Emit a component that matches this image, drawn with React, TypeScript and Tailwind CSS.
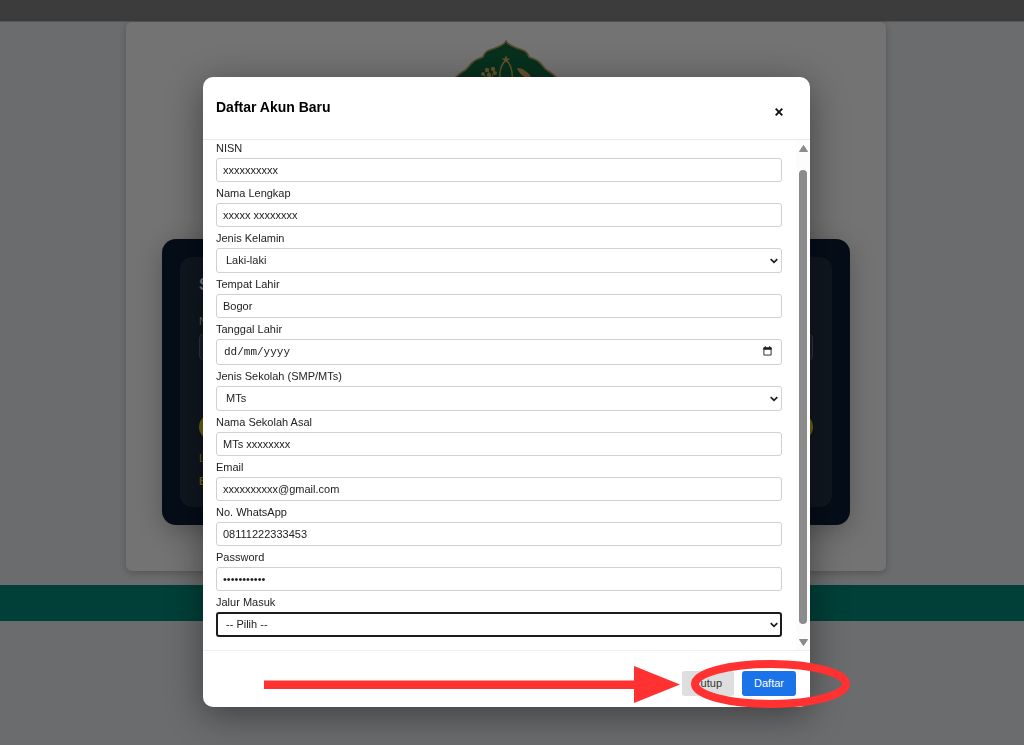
import React, { useState } from "react";

const fieldClass =
  "block w-full rounded-[3px] border border-[#d0d0d0] bg-white text-[11px] text-[#222] outline-none";

type RowProps = { id: string; label: string; children: React.ReactNode };

function Row({ id, label, children }: RowProps) {
  return (
    <div className="mb-[3px]">
      <label htmlFor={id} className="mb-[2px] block text-[11px] leading-4 text-[#222]">
        {label}
      </label>
      {children}
    </div>
  );
}

type TextRowProps = { id: string; label: string; value: string; type?: string };

function TextRow({ id, label, value, type = "text" }: TextRowProps) {
  const [text, setText] = useState(value);
  return (
    <Row id={id} label={label}>
      <input
        id={id}
        type={type}
        value={text}
        onChange={(e) => setText(e.target.value)}
        className={`${fieldClass} h-6 px-[6px]`}
      />
    </Row>
  );
}

function SelectRow({ id, label, options, active = false }: { id: string; label: string; options: string[]; active?: boolean }) {
  return (
    <Row id={id} label={label}>
      <div className="relative">
        <select
          id={id}
          className={
            active
              ? "block h-[25px] w-full appearance-none rounded-[3px] border-2 border-[#1c1c1c] bg-white px-2 text-[11px] text-[#222] outline-none"
              : `${fieldClass} h-[25px] appearance-none px-[9px]`
          }
        >
          {options.map((o) => (
            <option key={o}>{o}</option>
          ))}
        </select>
        <svg className="pointer-events-none absolute top-[9px] right-1 h-2 w-2" viewBox="0 0 8 8" fill="none" stroke="#1c1c1c" strokeWidth="1.7">
          <path d="M0.7 2.2 L4 5.3 L7.3 2.2" />
        </svg>
      </div>
    </Row>
  );
}

function Emblem() {
  return (
    <svg className="h-[110px] w-[110px]" viewBox="0 0 110 110">
      <path
        d="M55 1 C53 5 49 6 44.500 8 C39 10 34 10 32 17 C28 19 25 19 22 22 C18 25 17 29 13 31 C9 33 6 36 2 40 L3 70 L55 109 L107 70 L108 40 C104 36 101 33 97 31 C93 29 92 25 88 22 C85 19 82 19 78 17 C76 10 71 10 65.500 8 C61 6 57 5 55 1Z"
        fill="#07301d"
        stroke="#56492a"
        strokeWidth="1.6"
      />
      <path d="M55 15 L56.200 18.400 L59.400 18.400 L56.800 20.400 L57.800 23.600 L55 21.700 L52.200 23.600 L53.200 20.400 L50.600 18.400 L53.800 18.400Z" fill="#63532c" />
      <path d="M53 22 C50 26 48 31 49 40 M57 22 C60 26 62 31 61 40" fill="none" stroke="#63532c" strokeWidth="1.4" />
      <g fill="#63532c">
        <circle cx="36" cy="30" r="2.2" />
        <circle cx="42" cy="29" r="2.2" />
        <circle cx="32" cy="34" r="2" />
        <circle cx="38" cy="35" r="2.2" />
        <circle cx="44" cy="33" r="2" />
        <path d="M66 28 C72 28 78 32 81 39 C73 38 68 34 66 28Z" />
      </g>
      <path d="M32 34 L36 38 M37 30 L40 38 M43 30 L41 38" fill="none" stroke="#63532c" />
    </svg>
  );
}

function LoginPage() {
  return (
    <div className="flex min-h-screen flex-col bg-[#6b6c6e]" aria-hidden="true">
      <header className="h-[22px] border-b border-[#555] bg-[#3c3c3c]" />
      <main className="pr-3">
        <section className="mx-auto flex w-full max-w-[760px] flex-col items-center rounded-md bg-[#737373] px-9 pt-[18px] pb-[46px] shadow-[0_2px_7px_rgba(0,0,0,0.22)]">
          <Emblem />
          <div className="mt-[89px] w-full rounded-[14px] bg-[#050d18] p-[18px] shadow-[0_6px_24px_rgba(0,0,0,0.25)]">
            <div className="rounded-[12px] bg-[#10171f] px-[19px] py-[18px]">
              <h2 className="text-[16px] leading-5 font-bold text-[#777]">S</h2>
              <p className="mt-[18px] text-[11px] leading-4 text-[#666]">N</p>
              <div className="mt-[5px] h-[26px] rounded border border-[#30363c] bg-[#1a2129]" />
              <div className="mt-[54px] h-[26px] rounded-full bg-[#6d6314]" />
              <p className="mt-[10px] text-[11px] leading-4 text-[#6d6314]">L</p>
              <p className="mt-[7px] text-[11px] leading-4 font-bold text-[#6d6314]">B</p>
            </div>
          </div>
        </section>
      </main>
      <footer className="mt-[14px] h-9 bg-[#014038]" />
    </div>
  );
}

function Scrollbar() {
  return (
    <div className="flex w-[14px] shrink-0 flex-col items-center justify-between bg-[#fcfcfc] pt-[5px] pb-1">
      <svg className="h-[7px] w-[9px]" viewBox="0 0 9 7">
        <path d="M4.5 0.5 L8.5 6.5 H0.5Z" fill="#8b8b8b" stroke="#8b8b8b" strokeLinejoin="round" />
      </svg>
      <div className="mt-[18px] mb-[15px] w-2 flex-1 rounded-full bg-[#8b8b8b]" />
      <svg className="h-[7px] w-[9px]" viewBox="0 0 9 7">
        <path d="M4.5 6.5 L8.5 0.5 H0.5Z" fill="#8b8b8b" stroke="#8b8b8b" strokeLinejoin="round" />
      </svg>
    </div>
  );
}

function Annotation() {
  return (
    <svg className="pointer-events-none absolute -right-[42px] -bottom-[3px] h-[52px] w-[590px]" viewBox="0 0 590 52">
      <path d="M2 22.5 H372 V8 L418 26.5 L372 45 V31 H2Z" fill="#ff3131" />
      <ellipse cx="508.500" cy="26" rx="75.500" ry="20" fill="none" stroke="#ff3131" strokeWidth="8" />
    </svg>
  );
}

export default function App() {
  const [birth, setBirth] = useState("");
  return (
    <div className="font-['Liberation_Sans',Arial,sans-serif]">
      <LoginPage />
      <div className="fixed inset-0 flex items-start justify-center overflow-hidden pt-[77px] pr-[11px]">
        <div
          role="dialog"
          aria-labelledby="dialog-title"
          className="relative w-full max-w-[607px] rounded-[10px] bg-white shadow-[0_8px_36px_rgba(0,0,0,0.42)]"
        >
          <header className="flex items-start justify-between border-b border-[#eaeaea] px-[13px] pt-5 pb-[17px]">
            <h1 id="dialog-title" className="text-[14px] leading-5 font-bold text-black">
              Daftar Akun Baru
            </h1>
            <button type="button" aria-label="Tutup dialog" className="mt-[5px] flex h-5 w-9 items-center justify-center">
              <svg className="h-2 w-2" viewBox="0 0 8 8" stroke="#111" strokeWidth="1.9">
                <path d="M0.7 0.7 L7.3 7.3 M7.3 0.7 L0.7 7.3" />
              </svg>
            </button>
          </header>

          <form onSubmit={(e) => e.preventDefault()}>
            <div className="flex">
              <div className="min-w-0 flex-1 pr-[14px] pb-[10px] pl-[13px]">
                <TextRow id="nisn" label="NISN" value="xxxxxxxxxx" />
                <TextRow id="nama" label="Nama Lengkap" value="xxxxx xxxxxxxx" />
                <SelectRow id="kelamin" label="Jenis Kelamin" options={["Laki-laki", "Perempuan"]} />
                <TextRow id="tempat" label="Tempat Lahir" value="Bogor" />
                <Row id="tanggal" label="Tanggal Lahir">
                  <div className="relative">
                    <input
                      id="tanggal"
                      type="text"
                      placeholder="dd/mm/yyyy"
                      value={birth}
                      onChange={(e) => setBirth(e.target.value)}
                      className={`${fieldClass} h-[26px] px-[7px] font-['Liberation_Mono',monospace] placeholder:text-[#222]`}
                    />
                    <svg className="pointer-events-none absolute top-[7px] right-[10px] h-[10px] w-[9px]" viewBox="0 0 10 11">
                      <path d="M1 2 H9 V10 H1Z" fill="none" stroke="#1c1c1c" />
                      <path d="M0.5 1.500 H9.500 V4 H0.500Z M2 0.300 H3.200 V2 H2Z M6.800 0.300 H8 V2 H6.800Z" fill="#1c1c1c" />
                    </svg>
                  </div>
                </Row>
                <SelectRow id="jenis" label="Jenis Sekolah (SMP/MTs)" options={["MTs", "SMP"]} />
                <TextRow id="sekolah" label="Nama Sekolah Asal" value="MTs xxxxxxxx" />
                <TextRow id="email" label="Email" type="email" value="xxxxxxxxxx@gmail.com" />
                <TextRow id="wa" label="No. WhatsApp" type="tel" value="08111222333453" />
                <TextRow id="password" label="Password" type="password" value="abcdefghijk" />
                <SelectRow id="jalur" label="Jalur Masuk" options={["-- Pilih --"]} active />
              </div>
              <Scrollbar />
            </div>

            <div className="flex justify-end gap-2 border-t border-[#eeeeee] px-[14px] pt-[20px] pb-[11px]">
              <button type="button" className="h-[25px] rounded-[3px] bg-[#dedede] px-3 text-[11px] text-[#333]">
                Tutup
              </button>
              <button type="submit" className="h-[25px] rounded-[3px] bg-[#1a73e8] px-3 text-[11px] text-white">
                Daftar
              </button>
            </div>
          </form>
          <Annotation />
        </div>
      </div>
    </div>
  );
}
